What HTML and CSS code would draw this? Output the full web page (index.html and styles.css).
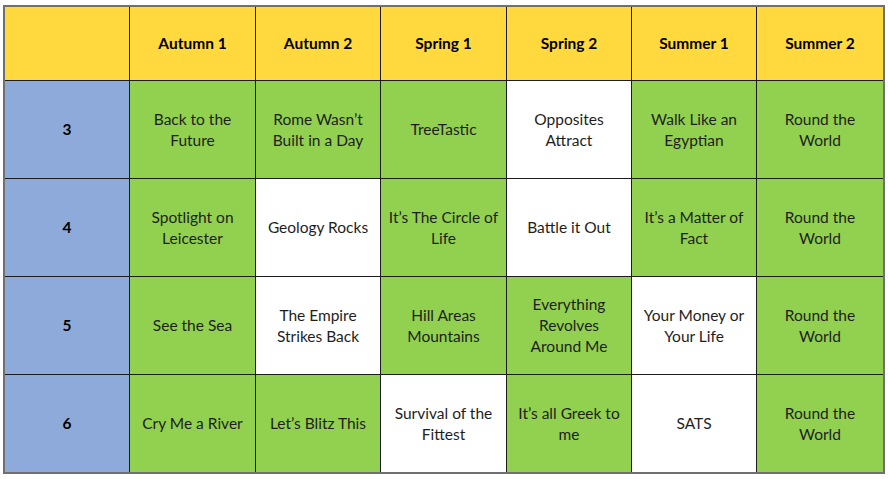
FILE: index.html
```html
<!DOCTYPE html>
<html lang="en">
<head>
<meta charset="utf-8">
<title>Topics</title>
<link rel="stylesheet" href="styles.css">
</head>
<body>
<div class="grid">
  <div class="cell head"></div>
  <div class="cell head">Autumn 1</div>
  <div class="cell head">Autumn 2</div>
  <div class="cell head">Spring 1</div>
  <div class="cell head">Spring 2</div>
  <div class="cell head">Summer 1</div>
  <div class="cell head">Summer 2</div>

  <div class="cell year">3</div>
  <div class="cell green">Back to the<br>Future</div>
  <div class="cell green">Rome Wasn’t<br>Built in a Day</div>
  <div class="cell green">TreeTastic</div>
  <div class="cell white">Opposites<br>Attract</div>
  <div class="cell green">Walk Like an<br>Egyptian</div>
  <div class="cell green">Round the<br>World</div>

  <div class="cell year">4</div>
  <div class="cell green">Spotlight on<br>Leicester</div>
  <div class="cell white">Geology Rocks</div>
  <div class="cell green">It’s The Circle of<br>Life</div>
  <div class="cell white">Battle it Out</div>
  <div class="cell green">It’s a Matter of<br>Fact</div>
  <div class="cell green">Round the<br>World</div>

  <div class="cell year">5</div>
  <div class="cell green">See the Sea</div>
  <div class="cell white">The Empire<br>Strikes Back</div>
  <div class="cell green">Hill Areas<br>Mountains</div>
  <div class="cell green">Everything<br>Revolves<br>Around Me</div>
  <div class="cell white">Your Money or<br>Your Life</div>
  <div class="cell green">Round the<br>World</div>

  <div class="cell year">6</div>
  <div class="cell green">Cry Me a River</div>
  <div class="cell green">Let’s Blitz This</div>
  <div class="cell white">Survival of the<br>Fittest</div>
  <div class="cell green">It’s all Greek to<br>me</div>
  <div class="cell white">SATS</div>
  <div class="cell green">Round the<br>World</div>
</div>
</body>
</html>
```

FILE: styles.css
```css
html, body {
  margin: 0;
  padding: 0;
  background: #ffffff;
}

body {
  padding: 5px 0 0 3px;
  font-family: Lato, "Liberation Sans", sans-serif;
}

.grid {
  display: grid;
  grid-template-columns: 124px 125px 124px 125px 124px 124px 126px;
  grid-template-rows: 73px 97px 97px 97px 97px;
  gap: 1px;
  width: 878px;
  background: #1c1c1c;
  border: 2px solid #6f6f6f;
}

.cell {
  display: flex;
  align-items: center;
  justify-content: center;
  text-align: center;
  font-size: 15.5px;
  line-height: 21px;
  color: #1e1e1e;
}

.head {
  background: #ffd93e;
  font-weight: 700;
  color: #000000;
}

.year {
  background: #8eaadb;
  font-weight: 700;
  color: #000000;
}

.green {
  background: #92d050;
}

.white {
  background: #ffffff;
}
```
